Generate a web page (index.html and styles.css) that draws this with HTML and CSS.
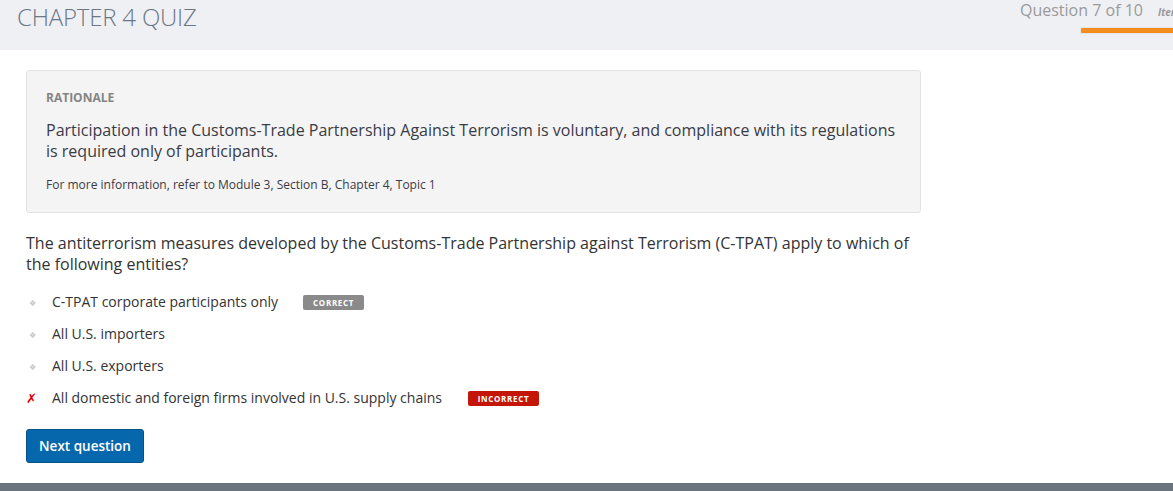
FILE: index.html
```html
<!DOCTYPE html>
<html>
<head>
<meta charset="utf-8">
<link rel="stylesheet" href="styles.css">
</head>
<body>
<header class="topbar">
  <h1 class="title">CHAPTER 4 QUIZ</h1>
  <div class="progress">
    <div class="progress-text"><span class="qcount">Question 7 of 10</span><span class="items">Items</span></div>
    <div class="progress-bar"></div>
  </div>
</header>
<main class="content">
  <section class="rationale">
    <div class="rationale-label">RATIONALE</div>
    <p class="rationale-text">Participation in the Customs-Trade Partnership Against Terrorism is voluntary, and compliance with its regulations is required only of participants.</p>
    <p class="rationale-ref">For more information, refer to Module 3, Section B, Chapter 4, Topic 1</p>
  </section>
  <p class="question">The antiterrorism measures developed by the Customs-Trade Partnership against Terrorism (C-TPAT) apply to which of the following entities?</p>
  <ul class="options">
    <li class="option"><span class="mark diamond">❖</span><span class="opt-text">C-TPAT corporate participants only</span><span class="badge badge-correct">CORRECT</span></li>
    <li class="option"><span class="mark diamond">❖</span><span class="opt-text">All U.S. importers</span></li>
    <li class="option"><span class="mark diamond">❖</span><span class="opt-text">All U.S. exporters</span></li>
    <li class="option"><span class="mark cross">✗</span><span class="opt-text">All domestic and foreign firms involved in U.S. supply chains</span><span class="badge badge-incorrect">INCORRECT</span></li>
  </ul>
  <button class="next-btn">Next question</button>
</main>
<footer class="footer"></footer>
</body>
</html>
```

FILE: styles.css
```css
* { box-sizing: border-box; }
html, body { margin: 0; padding: 0; }
body {
  font-family: "Open Sans", "Liberation Sans", sans-serif;
  background: #fff;
  width: 1173px;
  height: 491px;
  overflow: hidden;
  position: relative;
}
.topbar {
  height: 50px;
  background: #eff0f4;
  display: flex;
  justify-content: space-between;
  align-items: flex-start;
  padding-left: 17px;
}
.title {
  margin: 0;
  padding-top: 1px;
  font-weight: 300;
  font-size: 24px;
  line-height: 32px;
  color: #6b7785;
  letter-spacing: -0.2px;
}
.progress {
  display: flex;
  flex-direction: column;
  align-items: flex-end;
}
.progress-text {
  display: flex;
  align-items: baseline;
  white-space: nowrap;
  width: 153px;
  overflow: hidden;
}
.qcount {
  font-size: 16px;
  line-height: 21px;
  color: #9a9a9a;
}
.items {
  font-size: 10px;
  font-style: italic;
  font-weight: 700;
  color: #999;
  margin-left: 15px;
}
.progress-bar {
  margin-top: 6px;
  width: 93px;
  height: 7px;
  background: #f28d1f;
  border-radius: 2px 0 0 2px;
  border: 1px solid #e5e5e5;
  border-right: none;
}
.content {
  padding: 20px 0 0 26px;
  width: 921px;
}
.rationale {
  background: #f4f4f4;
  border: 1px solid #e2e2e2;
  border-radius: 3px;
  padding: 18px 19px 17px;
  height: 143px;
}
.rationale-label {
  font-size: 12px;
  font-weight: 700;
  color: #858585;
  line-height: 18px;
}
.rationale-text {
  margin: 13px 0 0;
  font-size: 16px;
  line-height: 21px;
  color: #3b3b45;
}
.rationale-ref {
  margin: 15px 0 0;
  font-size: 12px;
  line-height: 16px;
  color: #3b3b45;
}
.question {
  margin: 20px 0 0;
  font-size: 16px;
  line-height: 21px;
  color: #333;
}
.options {
  list-style: none;
  margin: 11px 0 0;
  padding: 0;
}
.option {
  display: flex;
  align-items: center;
  height: 32px;
  font-size: 14px;
  color: #333;
}
.mark {
  width: 26px;
  display: inline-block;
}
.diamond {
  font-size: 8px;
  color: #c4c4c4;
  padding-left: 3px;
}
.cross {
  color: #e00000;
  font-size: 13px;
  font-weight: 700;
  font-family: "DejaVu Sans", sans-serif;
  font-style: italic;
}
.opt-text { line-height: 20px; }
.badge {
  display: inline-block;
  font-size: 8px;
  font-weight: 700;
  color: #fff;
  letter-spacing: 0.7px;
  line-height: 15px;
  height: 15px;
  border-radius: 2px;
  text-align: center;
}
.badge-correct {
  background: #8a8a8a;
  margin-left: 25px;
  width: 61px;
}
.badge-incorrect {
  background: #c41608;
  margin-left: 26px;
  width: 71px;
}
.next-btn {
  margin-top: 15px;
  background: #0767ac;
  border: 1px solid #04528a;
  border-radius: 3px;
  color: #fff;
  font-family: "Open Sans", "Liberation Sans", sans-serif;
  font-size: 13.5px;
  font-weight: 600;
  height: 34px;
  width: 118px;
  padding: 0;
}
.footer {
  position: absolute;
  left: 0;
  right: 0;
  bottom: 0;
  height: 8px;
  background: #6a747c;
}
```
